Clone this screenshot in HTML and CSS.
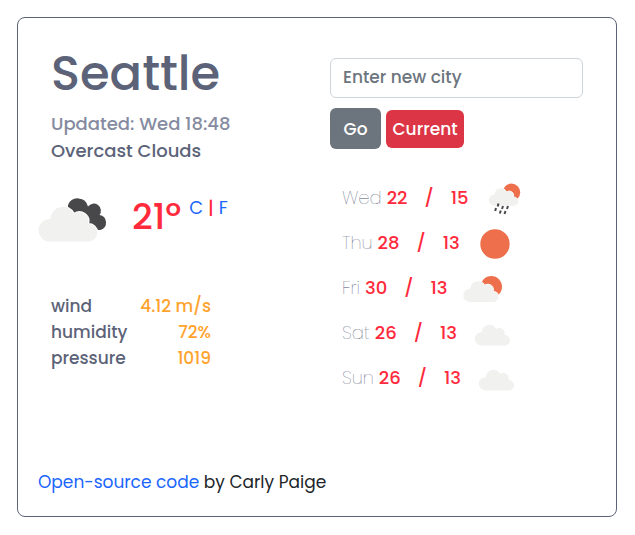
FILE: index.html
```html
<!DOCTYPE html>
<html lang="en">
<head>
<meta charset="utf-8">
<meta name="viewport" content="width=device-width, initial-scale=1">
<title>Weather</title>
<link rel="stylesheet" href="styles.css">
</head>
<body>
<svg class="defs" aria-hidden="true">
  <symbol id="cloud" viewBox="0 0 60 44" overflow="visible">
    <path d="M11 43.500A11 11 0 1 1 12.500 21.100A12.300 12.300 0 0 1 36 16A9 9 0 0 1 50 26A8.700 8.700 0 0 1 51 43.500Z"/>
  </symbol>
</svg>
<main class="card">
  <div class="columns">
    <section class="today">
      <header class="heading">
        <h1>Seattle</h1>
        <p class="updated">Updated: Wed 18:48</p>
        <p>Overcast Clouds</p>
      </header>
      <div class="now">
        <svg class="now-icon" viewBox="0 0 70 44" role="img" aria-label="Overcast clouds">
          <path class="dark" d="M30 7A10.500 10.500 0 0 1 50 8.500A6.500 6.500 0 0 1 61.500 17A7.700 7.700 0 0 1 62.500 32L50 32L30 14Z"/>
          <use class="light outlined" href="#cloud" width="60" height="44"/>
        </svg>
        <strong class="temperature">21º</strong>
        <span class="units"><a href="#celsius">C</a> <b>|</b> <a href="#fahrenheit">F</a></span>
      </div>
      <dl class="details">
        <dt>wind</dt><dd>4.12 m/s</dd>
        <dt>humidity</dt><dd>72%</dd>
        <dt>pressure</dt><dd>1019</dd>
      </dl>
    </section>
    <section class="side">
      <form class="search">
        <input type="text" placeholder="Enter new city" aria-label="City">
        <div class="buttons">
          <button class="go" type="submit">Go</button>
          <button class="current" type="button">Current</button>
        </div>
      </form>
      <ul class="forecast">
        <li><span class="day">Wed</span><b>22</b><b class="slash">/</b><b>15</b>
          <svg viewBox="0 0 50 45" role="img" aria-label="Rain">
            <circle class="sun" cx="32.500" cy="17.300" r="8.700"/>
            <use class="light outlined" href="#cloud" width="60" height="44" transform="translate(9.500 9) scale(.5)"/>
            <path class="rain" d="M19.500 28.500l-.8 3M24 31l-1 3M29 31l-1 3M17 33l-.8 3M21.800 35.500l-1 3M26.500 36l-1 3"/>
          </svg></li>
        <li><span class="day">Thu</span><b>28</b><b class="slash">/</b><b>13</b>
          <svg viewBox="0 0 50 45" role="img" aria-label="Sunny">
            <circle class="sun" cx="25" cy="24" r="14.700"/>
          </svg></li>
        <li><span class="day">Fri</span><b>30</b><b class="slash">/</b><b>13</b>
          <svg viewBox="0 0 50 45" role="img" aria-label="Partly cloudy">
            <circle class="sun" cx="34.300" cy="21.700" r="10.700"/>
            <use class="light outlined" href="#cloud" width="60" height="44" transform="translate(6 11) scale(.6)"/>
          </svg></li>
        <li><span class="day">Sat</span><b>26</b><b class="slash">/</b><b>13</b>
          <svg viewBox="0 0 50 45" role="img" aria-label="Cloudy">
            <use class="light" href="#cloud" width="60" height="44" transform="translate(7.500 9.500) scale(.6)"/>
          </svg></li>
        <li><span class="day">Sun</span><b>26</b><b class="slash">/</b><b>13</b>
          <svg viewBox="0 0 50 45" role="img" aria-label="Cloudy">
            <use class="light" href="#cloud" width="60" height="44" transform="translate(7.500 9.500) scale(.6)"/>
          </svg></li>
      </ul>
    </section>
  </div>
  <footer><a href="#source">Open-source code</a> by Carly Paige</footer>
</main>
</body>
</html>
```
FILE: styles.css
```css
* { box-sizing: border-box; }
body {
  margin: 0;
  padding: 17px 18px 17px 17px;
  background: #fff;
  color: #212529;
  font: 400 17px/26px Poppins, Inter, sans-serif;
}
h1, p, dl, dd, ul { margin: 0; padding: 0; }
a { color: #1a66ff; text-decoration: none; }
.defs { position: absolute; width: 0; height: 0; }
.card {
  padding: 28px 20px 21px;
  border: 1px solid #5c6378;
  border-radius: 8px;
}
.columns { display: grid; grid-template-columns: 1fr 1fr; gap: 26px; }
.heading { padding-left: 13px; color: #5c6378; font-size: 18px; line-height: 27px; font-weight: 500; }
h1 { margin-bottom: 8px; font-size: 48px; line-height: 56px; font-weight: 500; }
.updated { color: #858ba0; }
.now { display: flex; align-items: flex-start; margin-top: 31px; }
.now-icon { width: 70px; height: 50px; margin-right: 24px; }
.temperature { color: #ff2a3c; font-size: 36px; line-height: 44px; font-weight: 500; margin-right: 8px; }
.units { color: #ff2a3c; font-size: 18px; line-height: 26px; }
.units b { font-weight: 500; }
.details {
  display: grid;
  grid-template-columns: 80px 80px;
  margin: 48px 0 0 13px;
  color: #5c6378;
  font-weight: 500;
}
.details dd { color: #ffa32e; text-align: right; }
.search { padding: 12px 13px 0 0; }
.search input {
  display: block;
  width: 100%;
  height: 40px;
  padding: 5px 12px 7px;
  border: 1px solid #ced4da;
  border-radius: 6px;
  font: inherit;
  font-weight: 500;
}
.search input::placeholder { color: #6c757d; opacity: 1; }
.buttons { display: flex; align-items: center; gap: 5px; margin-top: 10px; }
button { border: 0; border-radius: 6px; color: #fff; font: inherit; font-weight: 500; }
.go { width: 51px; height: 41px; padding: 0; background: #6c757d; }
.current { width: 78px; height: 38px; padding: 0; background: #dc3545; }
.forecast { margin: 26px 0 0 12px; list-style: none; }
.forecast li { display: flex; align-items: center; height: 45px; color: #ff2a3c; font-size: 18px; }
.forecast b { font-weight: 500; }
.day { margin-right: 5px; color: #4a5170; font-weight: 200; }
.forecast .slash { margin: 0 17px; }
.forecast svg { width: 50px; height: 45px; margin-left: 10px; }
footer { margin-top: 69px; }
.light { fill: #f1f1f0; }
.outlined { stroke: #fff; stroke-width: 2px; paint-order: stroke; }
.dark { fill: #48484a; }
.sun { fill: #ed6f4c; }
.rain { fill: none; stroke: #48484a; stroke-width: 2px; }
```
